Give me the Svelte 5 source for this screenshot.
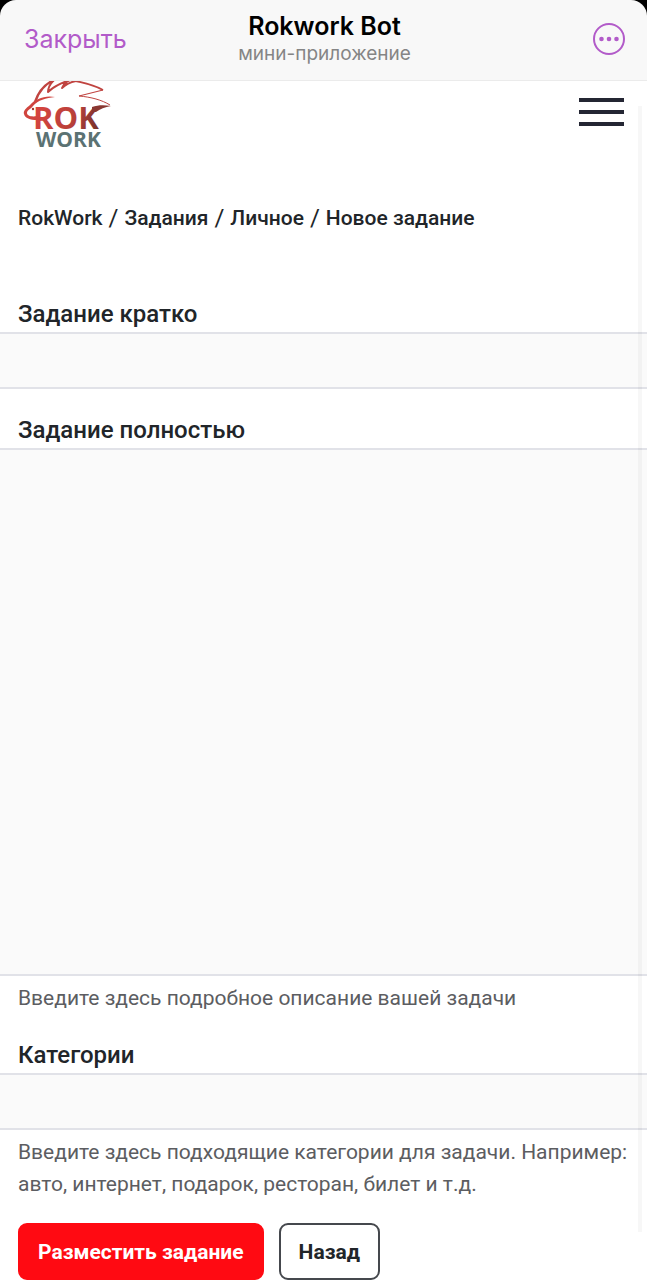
<script>
  const crumbs = ['RokWork', 'Задания', 'Личное'];

  let summary = $state('');
  let description = $state('');
  let categories = $state('');

  function handleSubmit(event) {
    event.preventDefault();
  }
</script>

<div class="app">
  <header class="bot-header">
    <button class="close" type="button">Закрыть</button>
    <div class="bot-title">
      <strong>Rokwork Bot</strong>
      <span>мини-приложение</span>
    </div>
    <button class="more" type="button" aria-label="Ещё">
      <svg viewBox="1 1 32 32" width="32" height="32">
        <circle cx="17" cy="17" r="15" fill="none" stroke="currentColor" stroke-width="2" />
        <circle cx="9.5" cy="17" r="2.3" fill="currentColor" />
        <circle cx="17" cy="17" r="2.3" fill="currentColor" />
        <circle cx="24.5" cy="17" r="2.3" fill="currentColor" />
      </svg>
    </button>
  </header>

  <div class="site-header">
    <a class="logo" href="/" aria-label="RokWork">
      <svg viewBox="0 0 90 74" width="90" height="74">
        <defs>
          <linearGradient id="logo-red" gradientUnits="userSpaceOnUse" x1="12" y1="22" x2="78" y2="46">
            <stop offset="0" stop-color="#d9453f" />
            <stop offset="0.6" stop-color="#b8403a" />
            <stop offset="1" stop-color="#6f302b" />
          </linearGradient>
        </defs>
        <g fill="none" stroke="#c04440" stroke-linejoin="round">
          <path stroke-width="2.4" d="M12 21 C15 12 20 4 31 -1" />
          <path stroke-width="2" d="M31 -1 C27 3 25 7 25 11 C30 6 38 2 47 -1 C43 1 40 4 39 7 C43 3 48 1 53 0" />
          <path stroke-width="1.8" d="M47 -1 C59 1 71 4 80 9" />
          <path stroke-width="1.2" d="M80 9 C72 11 64 13 56 15" />
          <path stroke-width="1" d="M56 15 C68 16 79 19 87 24" />
        </g>
        <path
          fill="#d0453f"
          d="M32 16 C22 14 12 18 7 24 C3 27 0 30 1 33 C2 37 7 39 14 39 L14 35 C9 36 4 35 4 32 C4 29 8 28 10 25 C15 19 23 17 32 16 Z"
        />
        <circle cx="10" cy="28" r="1.2" fill="#a33732" />
        <text x="10" y="48" font-size="31" fill="url(#logo-red)">ROK</text>
        <path fill="#8a3832" d="M69 26 C75 24 81 24 88 25 C82 26 77 28 73 31 L69 31 Z" />
        <text x="13" y="66" font-size="21" fill="#5b7273">WORK</text>
      </svg>
    </a>
    <button class="menu" type="button" aria-label="Меню">
      <span></span>
      <span></span>
      <span></span>
    </button>
  </div>

  <main>
    <nav class="breadcrumbs">
      {#each crumbs as crumb}
        <a href="/">{crumb}</a>
        <span>/</span>
      {/each}
      <a href="/" aria-current="page">Новое задание</a>
    </nav>

    <form onsubmit={handleSubmit}>
      <div class="field">
        <label for="summary">Задание кратко</label>
        <input id="summary" type="text" bind:value={summary} />
      </div>

      <div class="field">
        <label for="description">Задание полностью</label>
        <textarea id="description" rows="15" bind:value={description}></textarea>
        <p class="hint">Введите здесь подробное описание вашей задачи</p>
      </div>

      <div class="field">
        <label for="categories">Категории</label>
        <input id="categories" type="text" bind:value={categories} />
        <p class="hint">
          Введите здесь подходящие категории для задачи. Например: авто, интернет, подарок, ресторан,
          билет и т.д.
        </p>
      </div>

      <div class="actions">
        <button class="primary" type="submit">Разместить задание</button>
        <button class="secondary" type="button">Назад</button>
      </div>
    </form>
  </main>

  <div class="scroll-thumb"></div>
</div>

<style>
  :global(body) {
    margin: 0;
    background: #fff;
  }

  .app {
    position: relative;
    background: #fff;
    color: #212529;
    font-family: Roboto, 'Noto Sans', sans-serif;
    font-size: 21px;
    line-height: 32px;
  }

  button {
    margin: 0;
    padding: 0;
    border: none;
    background: none;
    font-family: inherit;
    cursor: pointer;
  }

  svg {
    display: block;
  }

  /* black shows behind the rounded corners of the sheet */
  .app::before {
    content: '';
    position: absolute;
    inset: 0 0 auto;
    height: 20px;
    background: #000;
  }

  .bot-header {
    position: relative;
    display: grid;
    grid-template-columns: 1fr auto 1fr;
    align-items: center;
    box-sizing: border-box;
    height: 81px;
    padding: 0 22px 2px 24px;
    border-bottom: 1px solid #ebebeb;
    border-radius: 16px 16px 0 0;
    background: #f8f8f8;
    font-family: Inter, sans-serif;
  }

  .close,
  .more {
    color: #b25bc9;
  }

  .close {
    justify-self: start;
    font-size: 25px;
    line-height: 32px;
  }

  .more {
    justify-self: end;
  }

  .bot-title {
    display: flex;
    flex-direction: column;
    align-items: center;
    gap: 2px;
  }

  .bot-title strong {
    color: #000;
    font-size: 25px;
    font-weight: 600;
    line-height: 28px;
  }

  .bot-title span {
    color: #858585;
    font-size: 19px;
    line-height: 24px;
  }

  .site-header {
    display: flex;
    align-items: flex-start;
    justify-content: space-between;
    padding: 0 23px;
  }

  .logo text {
    font-family: 'Open Sans', 'Noto Sans', sans-serif;
    font-weight: 700;
  }

  .menu {
    display: flex;
    flex-direction: column;
    gap: 8px;
    padding-top: 17px;
  }

  .menu span {
    width: 45px;
    height: 4px;
    background: #242633;
  }

  .breadcrumbs {
    display: flex;
    flex-wrap: wrap;
    gap: 6px;
    padding: 47px 18px 62px;
  }

  .breadcrumbs a {
    color: #212529;
    font-weight: 500;
    text-decoration: none;
  }

  .breadcrumbs span {
    font-size: 24px;
  }

  form {
    display: flex;
    flex-direction: column;
    gap: 23px;
  }

  .field {
    display: flex;
    flex-direction: column;
  }

  label {
    padding: 0 18px;
    font-size: 24px;
    font-weight: 500;
    line-height: 36px;
  }

  input,
  textarea {
    box-sizing: border-box;
    width: 100%;
    margin: 0;
    padding: 12px 18px;
    border: solid #e1e2e8;
    border-width: 2px 0;
    border-radius: 0;
    outline: none;
    background: #fafafa;
    color: #212529;
    font: inherit;
    resize: none;
  }

  input {
    height: 57px;
  }

  textarea {
    height: 528px;
  }

  .hint {
    margin: 6px 0 0;
    padding: 0 18px;
    color: #5c5d61;
  }

  .actions {
    display: flex;
    gap: 15px;
    padding: 0 18px;
  }

  .actions button {
    box-sizing: border-box;
    height: 57px;
    padding: 0 18px;
    border: 2px solid #ff0a12;
    border-radius: 9px;
    font-size: 21px;
    font-weight: 700;
  }

  .primary {
    background: #ff0a12;
    color: #fff;
  }

  .actions .secondary {
    border-color: #45484d;
    background: #fff;
    color: #212529;
  }

  .scroll-thumb {
    position: absolute;
    top: 106px;
    right: 5px;
    bottom: 48px;
    width: 4px;
    background: rgba(0, 0, 0, 0.03);
    pointer-events: none;
  }
</style>
